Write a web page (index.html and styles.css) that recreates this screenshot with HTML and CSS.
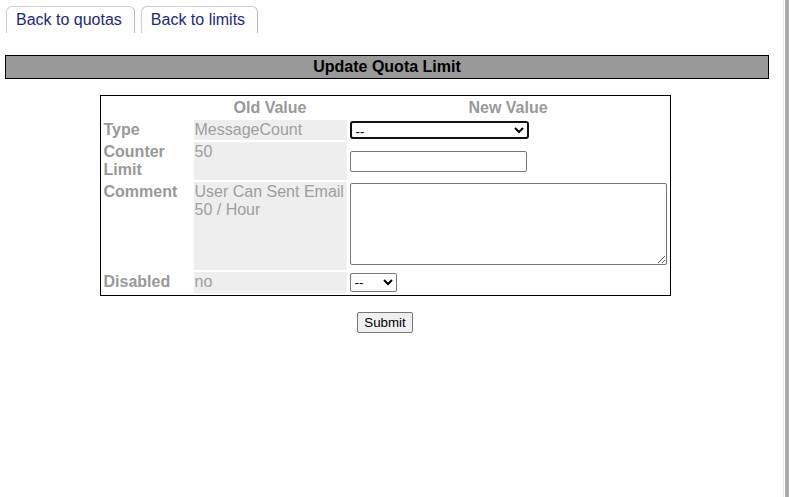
FILE: index.html
```html
<!DOCTYPE html>
<html>
<head>
<meta charset="utf-8">
<link rel="stylesheet" href="styles.css">
</head>
<body>
<div class="main">
  <div class="tabs">
    <a class="tab" href="#">Back to quotas</a>
    <a class="tab" href="#">Back to limits</a>
  </div>
  <div class="title">Update Quota Limit</div>
  <form class="form">
    <table class="grid">
      <colgroup>
        <col class="c1"><col class="c2"><col class="c3">
      </colgroup>
      <tr>
        <th></th>
        <th class="head">Old Value</th>
        <th class="head">New Value</th>
      </tr>
      <tr>
        <td class="label">Type</td>
        <td class="old">MessageCount</td>
        <td class="new"><select class="sel sel-type"><option>--</option></select></td>
      </tr>
      <tr>
        <td class="label">Counter Limit</td>
        <td class="old">50</td>
        <td class="new"><input class="txt" type="text"></td>
      </tr>
      <tr>
        <td class="label">Comment</td>
        <td class="old">User Can Sent Email 50 / Hour</td>
        <td class="new"><textarea class="area"></textarea></td>
      </tr>
      <tr>
        <td class="label">Disabled</td>
        <td class="old">no</td>
        <td class="new"><select class="sel sel-dis"><option>--</option></select></td>
      </tr>
    </table>
    <div class="actions"><button type="button" class="submit">Submit</button></div>
  </form>
</div>
<div class="edge"></div>
</body>
</html>
```

FILE: styles.css
```css
html, body {
  margin: 0;
  padding: 0;
  height: 100%;
}
body {
  display: flex;
  background: #fff;
  font-family: "Liberation Sans", Arial, sans-serif;
  font-size: 16px;
  line-height: 18px;
  color: #000;
}
.main {
  flex: 1;
  padding: 6px 14px 0 5px;
}
.edge {
  width: 6px;
  background: linear-gradient(to right, #e6e6e6 0 1px, #fff 1px 2px, #aaa 2px);
}
.tabs {
  display: flex;
  gap: 6px;
  margin-left: 1px;
}
.tab {
  display: block;
  padding: 4px 12px 4px 9px;
  border: 1px solid #cfcfcf;
  border-right-color: #b9b9b9;
  border-bottom: none;
  border-radius: 6px 6px 0 0;
  color: #1c2a7c;
  text-decoration: none;
  background: linear-gradient(#fff, #fdfdfd);
}
.title {
  margin-top: 22px;
  background: #999;
  border: 1px solid #000;
  text-align: center;
  font-weight: bold;
  padding: 2px 0;
}
.form {
  margin-top: 16px;
  padding-right: 4px;
}
.grid {
  margin: 0 auto;
  border: 1px solid #000;
  border-spacing: 2px;
  table-layout: fixed;
  width: 571px;
}
.c1 { width: 89px; }
.c2 { width: 153px; }
.c3 { width: 319px; }
.grid th, .grid td {
  padding: 1px;
}
.head {
  color: #999;
  font-weight: bold;
  text-align: center;
}
.label {
  color: #999;
  font-weight: bold;
  vertical-align: top;
  padding-left: 4px;
}
.old {
  color: #9e9e9e;
  background: #eee;
  vertical-align: top;
}
.new {
  vertical-align: middle;
}
.sel {
  display: block;
  font-family: "Liberation Sans", Arial, sans-serif;
  font-size: 13.33px;
  background: #fff;
  color: #000;
  box-sizing: border-box;
}
.sel-type {
  width: 179px;
  height: 18px;
  border: 2px solid #111;
  border-radius: 3px;
}
.sel-dis {
  width: 47px;
  height: 19px;
  border: 1px solid #767676;
  border-radius: 2px;
}
.txt {
  display: block;
  box-sizing: border-box;
  width: 177px;
  height: 21px;
  border: 1px solid #767676;
  border-radius: 2px;
  margin: 0;
}
.area {
  display: block;
  box-sizing: border-box;
  width: 317px;
  height: 82px;
  margin: 0 0 4px 0;
  border: 1px solid #767676;
  border-radius: 2px;
}
.actions {
  text-align: center;
  margin-top: 16px;
}
.submit {
  font-family: "Liberation Sans", Arial, sans-serif;
  font-size: 13.33px;
  line-height: 15px;
  padding: 2px 6px;
  background: #efefef;
  border: 1px solid #767676;
  border-radius: 2px;
  color: #000;
}
```
